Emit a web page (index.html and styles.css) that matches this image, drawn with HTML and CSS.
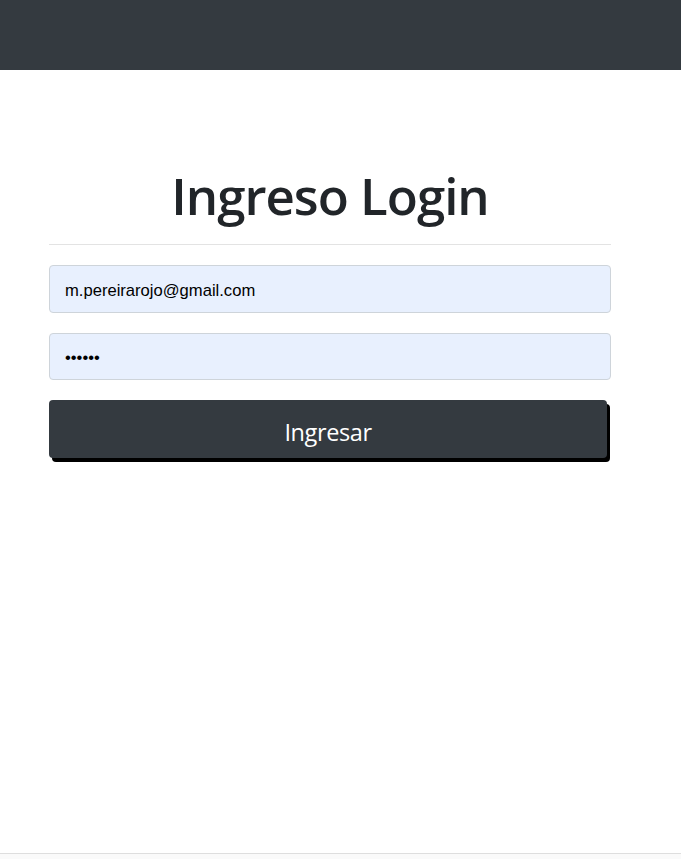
FILE: index.html
```html
<!DOCTYPE html>
<html lang="es">
<head>
<meta charset="utf-8">
<title>Ingreso Login</title>
<link rel="stylesheet" href="styles.css">
</head>
<body>
<nav class="navbar"></nav>
<main class="content">
  <section class="login">
    <h1 class="title">Ingreso Login</h1>
    <hr class="divider">
    <form class="form">
      <input class="field" type="email" value="m.pereirarojo@gmail.com">
      <input class="field field-pass" type="password" value="123456">
      <button class="btn" type="button">Ingresar</button>
    </form>
  </section>
</main>
<footer class="footer"></footer>
</body>
</html>
```
FILE: styles.css
```css
* { box-sizing: border-box; }
html, body { margin: 0; padding: 0; }
body {
  background: #fff;
  font-family: "Open Sans", "Noto Sans", sans-serif;
  color: #212529;
  height: 859px;
  display: flex;
  flex-direction: column;
}
.navbar {
  height: 70px;
  background: #343a40;
  flex: none;
}
.content {
  flex: 1;
}
.login {
  width: 562px;
  margin-left: 49px;
  padding-top: 90px;
}
.title {
  margin: 0;
  text-align: center;
  font-size: 51px;
  font-weight: 600;
  line-height: 70px;
  letter-spacing: -1px;
  color: #212529;
}
.divider {
  margin: 14px 0 20px;
  border: 0;
  border-top: 1px solid #e3e3e3;
}
.form {
  display: flex;
  flex-direction: column;
  gap: 20px;
}
.field {
  display: block;
  width: 100%;
  height: 48px;
  padding: 4px 15px 0;
  border: 1px solid #ced4da;
  border-radius: 4px;
  background: #e8f0fe;
  font-family: "Liberation Sans", Arial, sans-serif;
  font-size: 16.6px;
  color: #000;
  outline: none;
}
.field-pass { height: 47px; padding-top: 2px; }
.btn {
  width: 558px;
  height: 58px;
  padding: 6px 0 0;
  border: 0;
  border-radius: 4px;
  background: #343a40;
  color: #fff;
  font-family: "Open Sans", "Noto Sans", sans-serif;
  font-size: 23.5px;
  letter-spacing: -0.4px;
  box-shadow: 3px 4px 0 #000;
  cursor: pointer;
}
.footer {
  flex: none;
  height: 6px;
  border-top: 1px solid #dedede;
  background: #fafafa;
}
```
